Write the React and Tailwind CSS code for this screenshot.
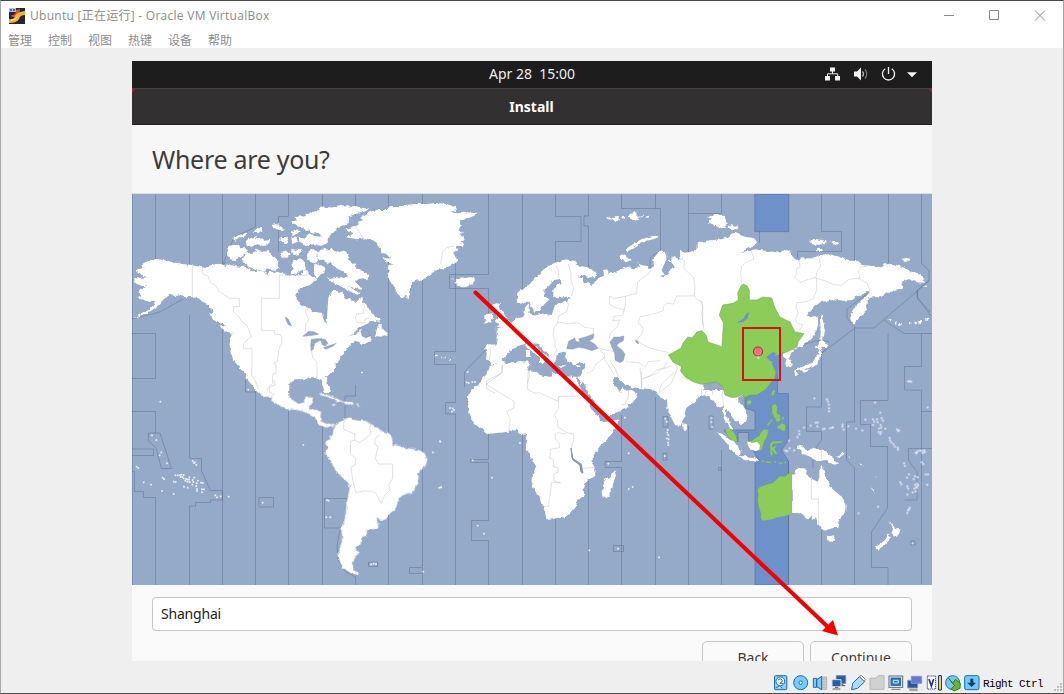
import React from "react";

const MENU = ["管理", "控制", "视图", "热键", "设备", "帮助"];

/* The map is drawn in overlapping tiles, three units to a pixel. */
const tile = (x, y) => `translate(${x} ${y}) scale(.33333)`;

const DOTS = {
  southWest: [[85,65],[60,166],[73,180],[88,217],[83,226],[105,250],[14,260],[19,264],[182,243],[186,249],[189,247],[193,255],[92,293],[96,297],[35,307],[57,314],[90,333],[125,305],[131,306],[130,286],[137,286],[143,286],[148,284],[155,285],[146,291],[151,291],[155,295],[162,297],[160,302],[166,298],[172,292],[171,299],[166,305],[173,306],[187,293],[182,300],[198,302],[184,306],[181,314],[194,310],[193,318],[207,308],[212,309],[156,320],[167,323],[195,327],[210,328],[216,328],[195,333],[210,337],[125,342],[250,346],[255,352],[266,349],[290,350],[392,368],[514,195],[585,360],[590,362],[583,412],[595,412],[903,217],[924,184],[922,323],[927,322],[349,29],[718,553],[725,551],[732,552],[874,575]],
  middle: [[80,67],[86,69],[97,66],[105,66],[83,36],[30,144],[38,145],[42,150],[36,155],[98,301],[156,353],[240,249],[113,497],[132,521],[448,571],[534,566],[505,311],[566,280],[566,387],[578,381],[676,176],[680,185],[683,210],[682,218],[685,225],[681,235],[686,238],[684,248],[685,255],[674,288],[657,592],[555,173],[1,245],[3,382]],
  east: [[125,174],[124,186],[127,201],[433,115],[471,118],[474,125],[477,134],[477,145],[477,154],[402,203],[387,213],[388,223],[382,231],[422,197],[437,188],[443,188],[442,199],[459,208],[464,206],[480,205],[486,203],[489,202],[517,200],[521,209],[518,194],[535,199],[558,206],[577,211],[586,179],[615,128],[631,158],[609,178],[613,185],[621,178],[623,187],[635,174],[639,182],[632,195],[609,195],[627,205],[634,203],[646,206],[626,216],[633,216],[631,222],[681,208],[684,213],[687,211],[659,234],[660,242],[665,248],[671,253],[675,260],[683,263],[684,269],[714,64],[719,64],[724,65],[773,142],[737,278],[743,274],[750,272],[756,272],[763,271],[758,279],[764,277],[740,280],[755,307],[760,312],[702,310],[705,318],[717,343],[735,349],[743,352],[711,353],[731,357],[691,367],[694,373],[712,379],[735,374],[741,371],[739,380],[744,376],[733,386],[741,384],[714,386],[737,394],[728,397],[712,404],[767,343],[774,343],[772,374],[719,443],[714,451],[717,448],[712,459],[624,440],[566,460],[728,550],[346,272],[352,273],[357,242],[359,265],[372,271]],
};

function Dots({ points }) {
  return points.map(([x, y], i) => <rect key={i} x={x - 2.5} y={y - 2.5} width="5" height="5" />);
}

function WorldMap() {
  return (
    <svg viewBox="132 194 800 391" className="block h-[391px] w-[800px] bg-[#95a9c9]">
      <defs>
        <filter id="coast" x="0" y="0" width="100%" height="100%" colorInterpolationFilters="sRGB">
          <feTurbulence type="fractalNoise" baseFrequency=".22" numOctaves="2" seed="4" result="noise" />
          <feDisplacementMap in="SourceGraphic" in2="noise" scale="4" xChannelSelector="R" yChannelSelector="G" />
        </filter>
      </defs>
      <g fill="#6d91c8" stroke="#557199" strokeWidth=".6">
        <path d="M754.8 194h34v37.6h-34z" />
        <path d="M745 395V408L755 411.500V430H724L732 440 738 442V432.500H748.500V440L757 458 760 461 755 463V585H788.500V461L781.500 450 788.500 440V393.500H777.500V370z" />
      </g>

      <g fill="none" stroke="#4b5b79" strokeOpacity=".4" strokeWidth=".9">
        <path d="M132.500 194V585M155.500 194V260M189.500 194V265M189.500 315V458M189.500 506V585M222.500 194V265L226 262M222.500 320V490M255.500 194V227L234 237 222.500 265M288.500 194V216.500H278.500V252M322.500 194V212M355.500 194V216M388.500 194V212M388.500 240V585M422.500 194V206M422.500 280V585M455.500 263V351.500H434.500V364.500H455.500V402.500H445.500V414H455.500V585M488.500 194V274.500H449.500V288.500H488.500V318M488.500 434V459.500H470.500V462.500H488.500V520.500H471.500V540.500H488.500V585M522.500 194V298M522.500 435V585M555.500 194V216.500H581V241.500H555.500V262M588.500 194V216H584V226H588.500V272M621.500 194V208.500H655.500M655.500 194V208.500H660.500V250L650 258V268M688.500 194V252M688.500 213.500H721.500V194M555.500 518V585M588.500 481V585M621.500 415V461.500H605V467.500H621.500V585M655.500 397V585M688.500 426V585M721.500 450V585M759.500 232V243M821.500 194V231.500H841.500V251.500H797.500V258M854.500 194V262M888.500 194V263M921.500 194V263L929 271V280L917.500 290V298L931 316" />
        <path d="M854.500 329V422H846.500V460L854.500 468V585M888 333.500V400.500H860.500V424.500H870.500V446.500H887.500V508L871.500 532V567.500H888V585M821.500 350V407H806.500V431.500H821.500V440L813 452V468M821.500 530V585M921.500 334V366.500H904.500V390H921.500V584M932 411.500H921.500M788.500 461V585M932 448.500H908.500V460L917 472V500H904.500M132 319L160 312 183 299M132 333.500H155.500V378.500H132M132 411.500H155.500V433M132 449H153.500V455.500H132M155.500 433H160L171.500 468.500H161.500L156 448 148.500 441V433zM189.500 458.500H201.500V471L210.500 490.500H222.500V500H210.500V502.500H195.500V506H189.500M132 471.500H134.500V491.500H143.500V497.500H155.500V585M259 497.500H273.500V507H259zM322.500 425V585M355.500 385V396H345V422M355.500 585V577L345 571 338 560 337 545 340 530M324.500 528V498.500H348M324.500 528H342M255.500 300V585M288.500 410V585M245.500 380V392H255.500M222.500 490V585M368.500 562H377.500V566.500H368.500zM422 567.500H409.500V573.500H422M488.500 347L464.500 372V387M613.500 545.500H623.500V551.500H613.500zM663 416.500H668V427H663zM663 453H667V460H663zM718.500 467.500H721V470.500H718.500zM709 416H713V429H709zM822 353L855 328H874L888 316 929 281M884 320L904 333.500H932M917 290V297L930 312M855 328L847 318V309L868 293M775 352L800 346 815 341H828V346L822 353M911 541H915V545H911z" />
      </g>

      <g fill="#fff" filter="url(#coast)">
        {/* North America, west and Arctic */}
        <g transform={tile(132, 190)}>
          <path d="M14,240 35,233 27,224 45,214 62,212 70,207 82,208 92,210 110,213 122,217 140,220 155,223 178,224 195,228 210,232 222,235 230,228 242,225 255,222 266,221 280,227 300,226 320,230 340,230 355,236 358,243 380,242 402,245 405,252 412,245 435,245 450,250 480,255 505,255 515,240 525,236 530,250 545,262 553,268 535,285 515,292 500,300 490,315 492,332 510,345 530,353 545,366 570,368 573,385 582,400 592,402 597,385 593,372 608,362 613,345 604,332 602,310 610,300 640,322 640,480 622,508 610,520 612,535 600,548 590,552 580,562 586,580 596,606 578,606 566,570 552,562 535,562 525,567 490,568 472,575 470,620 395,620 372,598 355,580 345,568 340,552 325,535 308,515 296,490 293,465 294,445 302,430 290,415 275,405 255,390 238,380 232,370 245,365 235,350 215,335 200,326 185,322 160,320 145,315 130,318 115,312 105,322 95,328 80,345 65,358 40,372 5,385 30,370 50,360 70,340 75,335 50,335 18,325 28,318 20,308 25,296 45,290 18,284 5,275 12,265 45,262 30,255 18,250Z" />
          <path d="M284,198 290,168 305,165 320,165 330,175 345,175 340,190 325,200 310,210 295,208ZM329,207 340,193 335,188 350,186 358,190 375,182 370,175 385,182 395,185 410,180 415,195 430,205 440,215 433,222 443,232 430,240 412,236 395,244 370,238 350,230 338,220ZM300,148 315,137 335,130 348,128 340,138 322,145 310,152ZM341,157 355,145 375,138 373,148 392,145 398,152 415,150 412,162 395,168 375,163 360,170 345,165ZM363,128 373,116 390,113 392,120 380,128ZM418,105 436,103 448,111 460,119 438,120 425,115ZM446,141 463,141 470,148 467,160 455,158 445,152ZM442,190 456,186 456,179 470,186 476,194 464,203 450,200ZM480,210 494,212 498,204 510,208 523,222 520,238 505,242 495,252 478,248 483,232ZM479,182 500,176 512,181 500,192 485,196ZM478,140 492,140 498,155 480,162ZM503,156 500,142 520,146 528,128 548,138 588,142 586,160 566,168 546,162 530,168 515,165ZM525,200 527,186 545,176 557,184 552,205 560,215 545,220 530,214ZM555,190 575,186 571,176 590,181 598,174 612,188 635,182 650,195 645,228 620,218 600,212 590,222 575,212 560,205ZM547,225 562,220 577,235 575,247 565,258 552,265 546,250ZM478,94 492,91 488,81 512,78 532,70 554,62 568,55 582,56 592,50 655,45 650,100 630,105 615,120 600,128 590,143 570,140 560,132 540,130 536,122 520,122 518,112 500,110 482,102ZM476,125 487,120 506,124 498,132 480,134ZM585,265 615,260 633,275 613,279 596,276ZM236,378 243,378 255,392 250,398ZM262,405 285,412 300,422 302,436 288,428Z" />
        </g>
        {/* Eastern Canada, Greenland and the western edge of Europe */}
        <g transform={tile(330, 190)}>
          <path d="M-5,322 10,303 28,305 38,310 45,325 60,325 75,340 85,330 97,320 100,335 110,345 120,362 130,375 145,385 155,388 148,395 130,392 110,402 90,412 70,430 60,437 75,432 95,420 112,425 108,437 125,440 118,450 95,458 75,452 60,465 45,485 35,490 20,505 15,525 5,538 -20,550ZM135,438 140,420 145,403 155,402 155,415 168,425 173,438 160,435 155,440ZM88,458 105,452 125,442 125,450 100,462ZM-40,205 -30,180 0,178 15,185 20,195 35,195 50,205 75,225 80,235 95,240 118,258 112,270 100,265 85,268 75,275 92,290 95,300 80,295 60,290 45,285 25,272 30,262 50,265 55,258 40,245 20,235 5,220 -10,215ZM10,278 32,276 60,292 90,310 80,315 50,298ZM-30,53 0,52 30,46 50,50 75,48 90,52 118,58 100,66 85,68 70,76 50,82 40,92 25,100 15,115 -30,125Z" />
          <path d="M43,119 65,110 82,105 82,97 100,90 88,82 105,72 122,66 140,60 175,60 178,52 215,50 225,45 255,42 290,42 320,38 350,42 375,52 378,62 365,68 385,70 400,65 420,68 443,68 435,76 415,85 400,90 390,97 392,110 385,118 400,125 390,135 405,140 403,150 390,160 405,160 398,168 378,168 385,180 370,190 382,210 375,220 365,225 345,235 320,240 305,250 280,268 258,272 243,280 243,298 236,325 225,318 215,322 203,312 195,298 188,280 175,270 172,255 180,240 170,232 188,222 165,215 162,205 185,205 165,190 155,190 152,175 140,158 128,150 105,145 80,148 50,142 72,130Z" />
          <path d="M362,263 371,266 380,275 377,266 388,268 393,262 405,264 420,262 432,264 435,275 427,282 410,290 397,292 378,286 385,281 373,280 379,274ZM485,345 500,340 510,342 505,352 520,368 530,385 540,395 535,405 515,410 495,412 508,402 495,395 505,385 500,370 490,362ZM462,385 472,372 488,370 490,380 484,396 462,402 467,392ZM640,370 610,378 580,380 560,385 550,395 530,410 505,418 500,425 515,432 518,450 512,465 475,463 465,470 470,490 468,508 480,515 488,525 500,520 515,515 530,490 540,480 560,468 585,462 640,460Z" />
          <path d="M93,545h5v5h-5zM315,494h5v5h-5zM334,500h5v5h-5zM342,500h5v5h-5zM355,506h5v5h-5z" />
        </g>
        {/* Europe and northern Asia */}
        <g transform={tile(500, 190)}>
          <path d="M-10,418 20,405 30,400 45,390 68,383 73,375 75,350 85,343 87,355 85,368 95,375 112,378 135,373 155,375 160,360 165,345 185,335 200,332 215,325 190,322 170,325 160,318 160,300 170,285 182,278 178,268 160,270 150,285 133,300 132,318 148,328 138,340 125,348 118,362 103,365 95,352 88,335 75,335 62,342 50,330 52,312 65,300 85,288 92,278 105,265 120,250 140,235 155,222 175,215 200,208 220,212 240,228 262,232 282,240 290,250 285,262 268,262 245,255 232,255 240,263 248,265 252,280 265,280 275,285 285,275 300,262 312,258 310,240 325,238 325,252 345,247 370,235 385,230 400,235 418,232 412,220 425,225 440,228 450,238 462,228 460,210 468,195 485,180 498,188 500,210 490,228 485,242 495,255 478,258 490,262 508,250 512,235 525,230 515,218 505,210 520,212 510,200 522,200 530,205 545,210 540,195 540,183 555,188 575,185 595,178 600,165 630,155 700,148 700,535 250,535 256,520 240,518 225,525 205,515 190,500 200,488 190,485 175,490 170,497 168,510 158,525 145,512 148,498 140,488 125,473 108,456 98,455 105,468 125,485 150,503 145,510 135,510 128,523 120,515 120,502 100,488 85,475 72,460 55,468 45,475 30,478 25,490 10,505 5,520 -10,525Z" />
          <path d="M360,205 364,196 380,190 378,178 390,168 402,161 420,150 444,142 470,136 475,142 460,148 438,153 418,161 400,170 392,180 380,188 377,196 384,206 397,207 390,215 374,213ZM317,85 329,82 340,85 334,89ZM338,85 356,80 356,92 344,93ZM362,82 378,80 370,87ZM383,80 401,66 411,68 409,78 421,76 413,86 425,88 403,93ZM412,82 428,74 428,82ZM432,80 450,77 444,84ZM624,96 634,87 626,80 644,76 675,78 675,118 655,112 643,106 647,99Z" />
          <path d="M78,480h12v18h-12zM176,526h20v4h-20zM230,526h12v5h-12z" />
        </g>
        {/* Siberia, Japan and Kamchatka */}
        <g transform={tile(700, 190)}>
          <path d="M-10,160 20,152 40,150 65,148 85,142 90,132 105,128 120,135 140,142 165,145 172,155 165,165 145,175 125,185 150,182 165,178 200,183 240,188 250,180 270,182 275,200 290,210 310,205 345,205 365,195 380,193 400,195 430,205 450,212 478,213 485,225 520,228 545,232 555,223 580,222 605,230 630,242 650,250 665,258 680,265 668,270 672,278 650,277 625,268 605,275 605,285 608,297 590,298 580,308 555,308 545,320 525,318 510,320 500,335 500,350 490,375 470,390 462,403 455,390 452,370 465,350 480,335 500,318 510,305 500,303 485,315 465,322 455,330 430,332 400,328 385,333 365,335 350,345 335,358 320,375 335,380 352,378 355,400 350,420 338,440 320,458 300,472 275,480 250,480 -10,480Z" />
          <path d="M26,96 38,87 24,83 38,76 54,74 58,85 72,88 70,95 83,97 81,107 63,111 48,105 34,101ZM82,115 94,106 106,110 114,106 116,114 98,121ZM327,153 345,147 369,150 364,158 378,150 380,160 356,165 335,163ZM389,157 413,156 418,163 402,164ZM347,180 355,172 370,181 364,184ZM606,208 618,204 632,206 628,212 612,212ZM360,382 366,376 370,400 375,420 372,435 367,440 367,452 361,445 362,420ZM358,453 366,450 374,460 385,465 380,474 368,474 358,482 354,475 346,472 355,465ZM360,480 364,490 356,510 352,522 338,532 322,534 310,540 295,542 285,545 290,537 305,532 320,525 338,518 345,507 352,495ZM307,545 315,539 326,538 321,545 313,548ZM282,545 290,543 294,549 290,558 285,555ZM245,493 255,484 270,475 280,478 282,484 272,492 266,503 275,513 278,525 272,532 258,530 256,518 260,508 250,500ZM668,289 677,286 685,292ZM565,387 573,389 570,396ZM585,396 590,394 593,400 586,401ZM598,399h7v5h-7zM627,397h7v5h-7zM643,395h7v5h-7zM655,393h8v5h-8zM675,388 682,385 685,389 677,393Z" />
        </g>
        {/* Central and South America */}
        <g transform={tile(132, 380)}>
          <path d="M355,-8 365,-3 372,12 382,22 390,42 376,32 368,18 358,8ZM385,-10 395,12 405,22 410,38 420,50 418,62 440,75 455,85 475,88 495,90 515,95 535,103 545,108 552,118 558,130 570,138 585,142 598,137 605,145 603,158 598,170 585,182 583,195 588,205 580,215 585,228 595,240 602,255 612,275 625,288 640,300 650,310 653,325 648,350 643,375 642,400 636,425 628,445 630,462 630,480 625,500 620,515 620,530 626,550 635,565 650,575 668,583 682,580 668,572 660,560 660,548 668,535 680,522 678,515 668,508 672,500 685,495 688,480 690,470 703,468 705,455 705,450 725,448 738,442 742,433 735,425 735,410 740,418 755,420 765,415 772,402 788,390 795,375 800,355 815,345 838,338 848,330 857,312 860,280 865,268 875,262 886,245 885,232 878,222 862,212 840,207 815,202 800,198 785,195 780,180 782,170 768,158 745,153 730,140 715,130 700,123 680,122 660,118 655,112 640,115 625,125 615,130 605,148 603,135 590,130 580,132 570,125 565,110 567,95 555,90 535,88 530,82 540,65 543,52 530,52 520,55 512,68 500,72 485,62 472,48 470,30 472,10 480,2 480,-10ZM559,44 579,41 593,46 611,54 625,61 637,68 615,67 607,58 587,51ZM637,64 651,64 664,68 664,74 637,72ZM600,72h9l2,5h-8zM673,73h9v3h-9zM568,-10 582,-10 587,18 582,28 572,15Z" />
        </g>
        {/* Africa and southern Asia */}
        <g transform={tile(440, 360)}>
          <path d="M145,32 150,18 165,15 183,5 205,10 235,3 265,5 268,15 262,30 275,35 290,35 300,45 325,50 335,50 335,40 350,38 365,45 390,50 410,50 412,65 428,100 445,125 452,145 475,170 488,185 500,185 535,178 532,195 520,215 500,240 480,258 465,278 458,292 458,310 467,330 465,348 445,362 430,378 432,395 432,408 412,420 408,440 390,462 375,472 350,475 325,480 318,472 315,455 305,435 300,415 285,395 275,370 275,355 285,335 288,318 280,305 270,288 258,270 258,255 262,240 258,222 245,225 230,210 205,215 180,218 165,220 140,222 125,208 108,195 95,180 85,160 88,145 83,125 85,105 95,88 115,75 130,50Z" />
          <path d="M415,52 425,45 432,20 435,-10 790,-10 790,107 775,112 758,130 740,142 735,155 733,170 727,188 715,200 705,185 695,165 685,145 682,118 670,118 655,105 650,95 635,88 605,85 575,82 560,75 540,62 530,52 518,52 520,65 530,80 540,97 545,82 553,92 575,90 592,100 588,112 575,128 560,145 535,155 505,170 492,172 485,158 470,140 460,120 445,98 435,75 428,65 422,75ZM525,330 530,342 524,356 520,372 508,405 500,415 488,412 485,398 490,383 488,368 498,358 512,352 518,340ZM727,190 736,192 742,204 738,212 729,211Z" />
        </g>
        {/* South-east Asia and Oceania */}
        <g transform={tile(670, 360)}>
          <path d="M-8,150 0,165 15,195 25,198 35,180 40,150 60,135 80,120 95,107 108,105 120,110 130,125 145,140 158,135 160,160 168,185 178,205 190,210 182,195 175,180 168,165 168,150 180,160 195,180 210,192 222,188 232,175 230,155 220,138 205,125 205,112 220,105 200,90 60,90 -8,0ZM37,190 47,196 49,208 41,214 38,206ZM144,217 158,223 176,235 194,248 204,260 212,275 210,288 198,284 185,270 172,252 160,238 148,225ZM208,288 226,289 236,293 252,294 264,300 268,305 246,303 222,300ZM232,244 246,248 258,242 268,246 274,258 268,270 255,273 240,266 233,255ZM380,257 392,255 402,263 412,277 430,263 455,268 475,279 488,290 497,305 508,315 488,313 468,300 445,303 432,303 425,292 405,284 398,282 398,272 385,266ZM498,287 515,282 522,275 523,283 510,291ZM365,345 373,343 376,330 386,324 412,326 408,336 412,348 432,360 444,365 448,350 448,328 455,318 463,338 466,355 476,362 480,380 497,395 512,408 525,428 527,445 520,465 508,480 502,500 488,505 468,510 450,500 440,488 435,472 428,480 425,475 427,465 415,478 405,470 385,458 365,460ZM470,527 480,529 492,526 494,536 488,545 478,545 472,538ZM658,484 670,494 676,508 692,508 688,520 680,530 670,529 667,515 669,503ZM655,524 663,532 650,545 642,560 630,568 616,568 618,560 634,549 645,540ZM535,288 543,294 538,293ZM550,297 560,301 552,300ZM568,310 582,316 572,315ZM598,378 618,395 610,392ZM615,345 621,353 615,349Z" />
        </g>
      </g>
      <g fill="#f3f6fb">
        <g transform={tile(132, 380)}><Dots points={DOTS.southWest} /></g>
        <g transform={tile(440, 360)}><Dots points={DOTS.middle} /></g>
        <g transform={tile(670, 360)}><Dots points={DOTS.east} /></g>
      </g>

      {/* Inland waters */}
      <g fill="#95a9c9" stroke="#7889a6" strokeWidth="1">
        <g transform={tile(132, 190)}>
          <path d="M512,439 530,424 546,425 560,433 542,436 528,438ZM538,448 552,446 570,446 558,455 548,460 544,478 537,482 536,464ZM564,447 580,448 588,460 580,468 571,465ZM574,473 588,468 613,460 600,470 582,478ZM461,380 469,388 479,408 469,404 461,388Z" />
        </g>
        <g transform={tile(330, 190)}><path d="M92,422 104,418 116,425 120,438 108,444 96,438Z" /></g>
        <g transform={tile(500, 190)}>
          <path d="M200,476 206,454 224,444 228,454 240,456 236,446 256,441 282,431 280,445 268,452 285,463 294,475 276,482 254,475 236,472 218,478ZM330,456 342,441 358,441 372,438 370,452 356,460 350,467 366,480 375,492 370,512 360,518 345,510 344,490 335,470ZM406,450 414,454 416,462 409,458Z" />
        </g>
        <path d="M571 448L572 458 581 464 583 473 581 472 580 465 573 460z" />
      </g>

      {/* Selected time zone */}
      <g fill="#8ccd59" stroke="#699b51" strokeWidth=".5">
        <path d="M668.500,355 675,351.500 681,348 683,343 688,337 692,338 697,332 701.500,330.500 706,335 708,342 714,344 720,346 722,347 722.500,337 723.500,323 719.300,315 722.700,305 733.300,303.300 738.300,300 737.700,293 741,286 743.500,284 747,286 749.300,290 749.300,300 756.700,300 763,297 771.700,298 775,308 780,317 790,322 795,332 800,333 804,333.700 798,342 797,347 787,352 782,353 780,359 772,362 776,371.700 775,378 770,384 765,390 757,395 750,395 745,397.500 741.700,395 737,397 731.700,397.500 725,395 723,387 716.700,381.700 706.700,383.500 700,384 693,381.700 685,376.700 680.500,371 681.500,366.500 673,362Z" />
        <g transform={tile(670, 360)}>
          <path d="M304,100 311,88 316,93 311,105 306,108ZM230,124 240,119 246,124 242,133 232,135ZM165,208 175,205 189,213 197,225 202,245 188,242 176,232 169,218ZM232,243 246,242 256,234 268,228 272,218 282,208 296,210 290,232 283,244 278,258 276,270 268,272 270,255 262,245 248,248ZM306,136 316,131 322,141 320,159 332,167 328,175 314,173 306,159ZM315,174 327,170 333,179 321,187ZM336,169 344,173 338,181ZM324,198 336,190 346,194 347,211 339,214 331,206 321,206ZM290,195 306,177 308,180 294,198ZM300,253 308,244 332,244 340,240 334,248 308,252 306,261 322,257 313,266 323,282 314,283 307,268 309,285 302,287ZM271,303 283,301 282,308ZM286,303 304,305 302,310 288,308ZM307,304 319,304 318,310ZM322,306 340,308 331,314ZM342,306 350,304 346,312ZM262,390 268,382 284,376 296,371 308,369 318,360 330,348 344,350 362,336 366,340 366,461 344,469 322,472 308,478 294,480 278,482 272,475 273,461 265,436 263,415 266,405Z" />
        </g>
      </g>
      <g fill="#6d91c8">
        <path d="M766 357l7-5 3 1-1 3 6-2-1 5-5 3-5-1z" />
        <path d="M736 323l7-4 3-5 3-2-1 6-5 4z" />
        <path d="M780.500 354L777.500 375 775.500 381 773.500 382 776 376 775.500 371 771.500 363 777 361z" />
      </g>

      {/* Inland time-zone borders */}
      <g fill="none" stroke="#b2b2b2" strokeWidth="1.200" strokeLinejoin="bevel">
        <g transform={tile(132, 190)}>
          <path d="M181,222V323M211,232 213,252 228,258 235,278 250,285 262,305 285,320 295,325H322V350H305L304,365 318,378 330,395 346,408 350,420 358,440 345,450 335,460V475H360V535L358,555 370,572 378,595M525,235V256H442V325H388V422H428V433H445L450,445 448,462 440,480 436,515 425,520 432,525 432,550 422,552V580L410,590 405,602M553,265 540,277 527,297V358L520,362 525,378 530,390 522,398 520,425M538,480 542,502 555,517V563" />
        </g>
        <g transform={tile(330, 190)}>
          <path d="M98,330 103,345 100,370 80,372 76,384 83,398H105V387L118,384M373,168 352,172 338,185 332,222M54,439 80,432 82,420 98,418M480,472 482,488 477,510M470,582 515,549 518,525M470,582V595L495,610M594,530 599,560 591,580M76,107 100,146" />
        </g>
        <g transform={tile(500, 190)}>
          <path d="M166,226 176,240V262M205,222 213,250V272L221,292 215,318M200,328 205,345 200,365 176,378 172,400 162,414 159,435 165,450V470L171,480 163,490M174,397 202,401 230,398 242,403 254,412 281,416 278,430M452,240 445,252 413,275 410,310 370,320 343,326 328,318V342L345,353 375,360M376,318V346L368,376 342,379 338,393 358,390 352,410 332,428 328,445M545,206 553,212 552,236 567,250 580,262 585,292 583,318H530L520,342 500,340 490,350V362L468,370 420,380 415,398 430,416 425,432 410,450 425,462 445,472 470,480 495,485 507,490M583,318 592,330 605,335 608,355V400L612,420M265,455 280,470 316,480 345,485M300,480 314,494V502L288,522 278,542 260,550M308,500 328,530 340,550M376,515 416,518 436,530 444,515 480,512M420,535 424,570V600M425,567 450,558 470,540 492,534 502,515M478,602 486,580 508,560 525,545" />
        </g>
        <g transform={tile(700, 190)}>
          <path d="M152,178 162,207 134,220 125,230 122,246 125,288M297,206 300,230 290,235V252L283,260 300,278 325,268 348,262 352,242 362,230 358,208 370,195M346,264 375,272 400,284 425,286 430,280 448,268 480,264 475,245 480,232 502,227M350,264V300L340,325 320,335 290,338 288,352 295,370 286,385 292,400 308,404 298,423 290,425M474,265 502,280 510,304M0,332 8,345 5,368 10,405" />
        </g>
        <g transform={tile(132, 380)}>
          <path d="M425,0 430,14 412,22V37L427,43 415,53M643,75 650,112M643,115 635,130V148L668,162V180L682,188 705,172 717,162 713,142 720,128M671,180 656,184 655,222 670,235V255L657,262 662,300 672,338 700,332 730,337 748,370 758,345 775,330 770,315 782,295V252H740L730,235 738,200 728,192 730,175 742,165" />
        </g>
        <g transform={tile(440, 360)}>
          <path d="M186,15V39L140,62V74L222,124V144L200,154 211,180 206,210M265,28 262,88 286,100 296,97 355,124V110L415,108M355,124V146L343,164 353,182V200L380,218 400,222 402,240 395,255V290M380,222 354,218 346,222V237L358,249V263L330,268 332,278 328,294 340,298V320L354,323V337L342,341V363L362,368 334,368 332,396 327,424V438L310,440M395,290 411,306 425,311 428,342M428,325 465,322M535,50 525,25 509,0M605,85V35M610,55 645,43 665,28 695,18M655,98 668,90 693,70 705,45 712,25 705,10M545,132 553,136 565,112V94M725,50 749,62 784,72" />
        </g>
        <g transform={tile(670, 360)}>
          <path d="M424,355V417H445V499M454,267V302M88,70 108,75V95L104,109M95,107V87M128,105V85L140,65M160,85 156,105 162,135" />
        </g>
      </g>

      <circle cx="758" cy="351.500" r="4.500" fill="#f18585" stroke="#b72b2b" strokeWidth="1.200" />
      <path d="M755.500 351h5M756 349h4M756 353h4" stroke="#d54e4e" strokeWidth=".7" />
      <path d="M757.300 356.500h2v2.500h-2z" fill="#dfe9c8" />
    </svg>
  );
}

function TrayIcons() {
  return (
    <svg viewBox="820 65 100 20" className="absolute right-3 top-1 h-5 w-[100px]" fill="#f2f2f2">
      <path d="M830 67.500h5v4h-5zM825 76h5v4.500h-5zM835 76h5v4.500h-5z" />
      <path d="M832.500 71v3M827.500 76v-2.200h10.200V76" fill="none" stroke="#eee" />
      <path d="M854 71.500h3l4-4v13l-4-4h-3z" />
      <path d="M862.500 71.300q2 2.700 0 5.400" fill="none" stroke="#bbb" strokeWidth="1.200" />
      <path d="M865 69.300q3.400 4.700 0 9.400" fill="none" stroke="#777" strokeWidth="1.200" />
      <path d="M885.300 68.700a6.100 6.100 0 1 0 6.400 0M888.500 67v7" fill="none" stroke="#eee" strokeWidth="1.300" />
      <path d="M907 72.200h10l-5 5z" />
    </svg>
  );
}

function StatusIcons() {
  return (
    <svg viewBox="39 132 624 54" className="h-[18px] w-[208px]" strokeWidth="3">
      <g fill="#d3efff" stroke="#176bb7">
        <rect x="43.500" y="137" width="37" height="42" rx="3" fill="#8fcdf2" />
        <circle cx="61" cy="154" r="13" fill="#fff" /><path d="M54 150q7-7 13 0q1 7-8 10h10" fill="none" /><path d="M47 174l12-6 8 7" />
        <circle cx="122" cy="158" r="21" fill="#76cdf6" /><circle cx="122" cy="158" r="5" fill="#eaf9ff" />
        <path d="M183 141h17v37h-19v-8z" fill="#ccc" stroke="#b1b1b1" /><path d="M188 148h8M188 156h8M188 164h8M188 172h8" stroke="#aaa" strokeWidth="2" />
        <path d="M160 145h10v27h-10zM170 149l15-10v40l-15-9z" fill="#74ccf4" />
        <path d="M229 137h28v23h-28z" fill="#215eaf" stroke="#888" /><path d="M235 167h21M241 163h9" stroke="#555" /><path d="M216 149h27v21h-27z" fill="#215eaf" stroke="#ddd" /><path d="M218 177h23M225 172h10" stroke="#555" />
        <path d="M275 179l3-19 20-20 16 15-21 20z" fill="#a8def8" /><path d="M299 139l5-3 12 12-3 7z" fill="#fff" stroke="#777" />
        <path d="M330 145l18-1 7-7h17v41h-42z" fill="#d1d1d1" stroke="#b7b7b7" />
        <rect x="387" y="138" width="41" height="34" fill="#f7f7f7" stroke="#666" /><rect x="393" y="144" width="29" height="22" fill="#2873bd" /><path d="M400 151h15v8h-15z" fill="#2873bd" stroke="#d9f3ff" /><path d="M394 178h27" stroke="#777" />
        <path d="M443 151h30v23h-30z" fill="#1c58a7" stroke="#999" /><path d="M454 139h31v21h-31z" fill="#6578d2" stroke="#8791dc" /><path d="M448 180h25" stroke="#555" />
        <rect x="502" y="138" width="25" height="39" fill="#fff" stroke="#34429a" strokeDasharray="4 2" /><path d="M507 147l7 21 7-21" fill="none" stroke="#26348c" strokeWidth="5" />
        <path d="M536 137h8v43h-8z" fill="#fafade" stroke="#111" /><path d="M538 160h5v18h-5z" fill="#ddda45" stroke="none" />
        <circle cx="578" cy="158" r="21" fill="#79caee" /><path d="M566 145l12 15 8-12 15 12-1 15-18 8-8-7 10-9z" fill="#69b72f" stroke="#287b25" />
        <rect x="614" y="137" width="43" height="42" rx="5" fill="#72cbf4" /><path d="M631 146h9v12h8l-13 13-13-13h9z" fill="#153c71" stroke="none" />
      </g>
    </svg>
  );
}

function Titlebar() {
  return (
    <header className="h-[47px] bg-white text-[#8b8b8b]">
      <div className="flex h-[30px] items-center pl-2">
        <svg viewBox="0 0 16 16" className="h-4 w-4">
          <path d="M0 0h16v16H0z" fill="#22283a" />
          <path d="M0 0h7v4H0z" fill="#bac3d3" /><path d="M1 1h2v2H1zM4 1h2v2H4z" fill="#526383" />
          <path d="M2 7q5 1 5-5l4-1q0 7-6 8-3 0-3-2z" fill="#d6552c" />
          <path d="M0 11q5 1 6-3 2-4 10-5v4q-5 0-6 4-2 4-10 4z" fill="#f7b43b" />
          <path d="M2 12q5 0 6-3" fill="none" stroke="#ffe195" />
        </svg>
        <h1 className="ml-[5px] whitespace-nowrap font-['Open_Sans','Noto_Sans_CJK_SC',sans-serif] text-[12px] tracking-[0.27px]">Ubuntu [正在运行] - Oracle VM VirtualBox</h1>
        <svg viewBox="0 0 102 11" className="-mt-px ml-auto mr-[17px] h-[11px] w-[102px]" fill="none" stroke="#888">
          <path d="M0 5.500h10M45.500.5h9v9h-9zM91 .5l10 10M101 .5l-10 10" />
        </svg>
      </div>
      <nav className="flex h-[17px] items-center gap-4 pl-[7px] font-['Noto_Sans_CJK_SC',sans-serif] text-[12px] leading-none">
        {MENU.map((m) => <span key={m} className="w-6 whitespace-nowrap">{m}</span>)}
      </nav>
    </header>
  );
}

export default function App() {
  return (
    <div className="relative flex h-[694px] w-[1064px] flex-col overflow-hidden border border-x-[#a6a6a6] border-b-[#4c4c4c] border-t-[#4a494b] bg-[#efefef]">
      <Titlebar />
      <main className="mx-auto mt-[13px] h-[600px] w-[800px] shrink-0 overflow-hidden bg-[#f9f9f9] font-['Noto_Sans',sans-serif] text-[#3c3c3c]">
        <div className="relative flex h-[27px] items-center justify-center bg-[#1d1d1d] pb-[2px] text-[14px] text-[#eee]">
          <span className="whitespace-pre">Apr 28  15:00</span>
          <TrayIcons />
        </div>
        <div className="relative flex h-[37px] items-center justify-center border-b border-t border-b-[#232122] border-t-[#444142] bg-[#333031] pr-px text-[14px] font-bold text-white">
          <span>Install</span>
          <i className="absolute left-0 top-0 h-1 w-1 bg-[#8b2036] [clip-path:polygon(0_0,100%_0,0_100%)]" />
          <i className="absolute right-0 top-0 h-1 w-1 bg-[#8b2036] [clip-path:polygon(0_0,100%_0,100%_100%)]" />
        </div>
        <h2 className="flex h-[69px] items-center border-b border-[#ddd] bg-[#f7f7f7] pl-5 pt-[2px] text-[25px] font-normal tracking-[-0.3px]">Where are you?</h2>
        <WorldMap />
        <section className="px-5 pt-3">
          <div className="flex h-[34px] items-center rounded-[4px] border border-[#c9c5c2] bg-white px-2 pb-[2px] text-[14px] tracking-[-0.2px] text-[#222]">Shanghai</div>
          <div className="mt-[10px] flex justify-end gap-[6px] text-[14px]">
            <button className="h-[34px] w-[102px] rounded-[5px] border border-[#c9c5c2] bg-[#fafafa] pb-[2px]">Back</button>
            <button className="h-[34px] w-[102px] rounded-[5px] border border-[#c9c5c2] bg-[#fafafa] pb-[2px]">Continue</button>
          </div>
        </section>
      </main>
      <footer className="mt-[12px] flex h-[20px] items-center pl-[772px]">
        <StatusIcons />
        <span className="ml-[2px] whitespace-nowrap pt-[2px] font-['Liberation_Mono',monospace] text-[11px] tracking-[-0.6px] text-black">Right Ctrl</span>
        <svg viewBox="0 0 9 9" className="ml-auto mt-2 h-[9px] w-[9px]" fill="#bdbdbd"><path d="M6 0h2v2H6zM3 3h2v2H3zM6 3h2v2H6zM0 6h2v2H0zM3 6h2v2H3zM6 6h2v2H6z" /></svg>
      </footer>
      <svg viewBox="0 0 1064 694" className="pointer-events-none absolute -left-px -top-px h-[694px] w-[1064px]">
        <path d="M743 328h37v52h-37z" fill="none" stroke="#d51313" strokeWidth="2" />
        <path d="M475.500 292.500L829 628" stroke="#f20000" strokeWidth="4" strokeLinecap="round" />
        <path d="M838 635.500l-16-4.500 11-11z" fill="#f20000" />
      </svg>
    </div>
  );
}
